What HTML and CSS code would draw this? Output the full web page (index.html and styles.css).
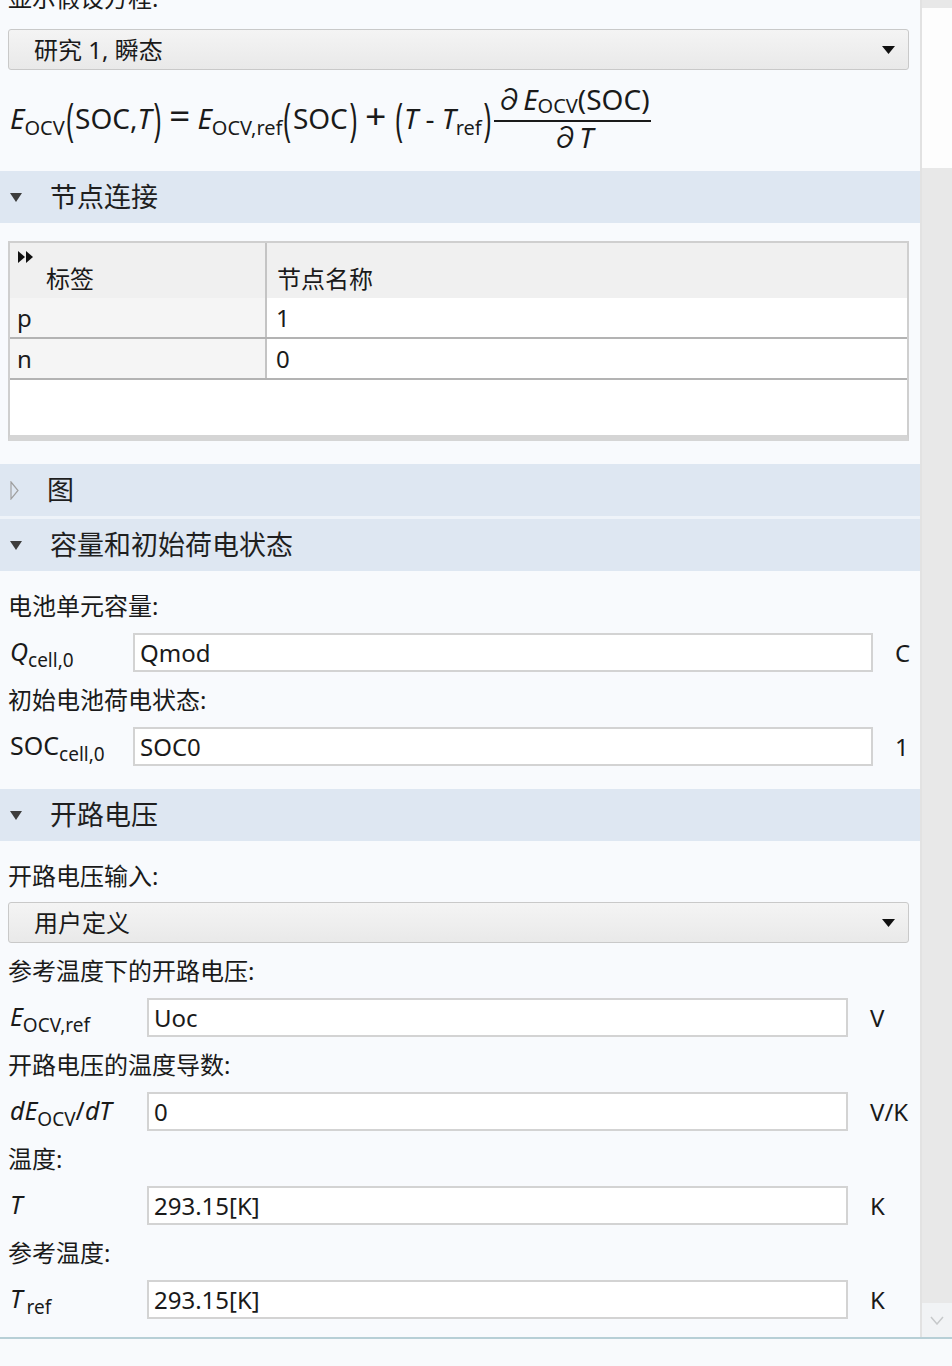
FILE: index.html
```html
<!DOCTYPE html>
<html lang="zh-CN">
  <head>
    <meta charset="UTF-8" />
    <meta name="viewport" content="width=device-width, initial-scale=1.0" />
    <title>电池设置</title>
    <link rel="stylesheet" href="styles.css">
  </head>
  <body>
    <div class="window">
      <div class="panel">
        <div class="top">
          <div class="caption first">显示假设方程:</div>
          <div class="combo">
            <span>研究 1, 瞬态</span>
            <svg class="combo-arrow" width="13" height="8" viewBox="0 0 13 8"><polygon points="0,0 13,0 6.5,8" /></svg>
          </div>
          <div class="equation">
            <div class="formula">
              <i>E</i><sub>OCV</sub><span class="paren">(</span>SOC,<i>T</i><span class="paren">)</span><span class="op">=</span><i>E</i><sub>OCV,ref</sub><span class="paren">(</span>SOC<span class="paren">)</span><span class="op">+</span><span class="paren">(</span><i>T</i> - <i>T</i><sub>ref</sub><span class="paren">)</span><span class="frac"><span class="num">∂<i>E</i><sub>OCV</sub>(SOC)</span><span class="den">∂<i>T</i></span></span>
            </div>
          </div>
        </div>

        <!-- 节点连接 -->
        <div class="section-head">
          <svg class="caret" width="12" height="9" viewBox="0 0 12 9"><polygon points="0,0 12,0 6,9" /></svg>
          <span>节点连接</span>
        </div>
        <div class="section-body nodes">
          <div class="node-table">
            <table>
              <tr>
                <th class="col-tag">
                  <svg class="expand" width="16" height="12" viewBox="0 0 16 12"><polygon points="0,0 7,6 0,12" /><polygon points="8,0 15,6 8,12" /></svg>
                  <span>标签</span>
                </th>
                <th><span>节点名称</span></th>
              </tr>
              <tr>
                <td class="col-tag">p</td>
                <td>1</td>
              </tr>
              <tr>
                <td class="col-tag">n</td>
                <td>0</td>
              </tr>
            </table>
          </div>
        </div>

        <!-- 图 (collapsed) -->
        <div class="section-head collapsed">
          <svg class="caret-open" width="10" height="19" viewBox="0 0 10 19"><polygon points="1,1 8,9.5 1,18" /></svg>
          <span>图</span>
        </div>

        <!-- 容量和初始荷电状态 -->
        <div class="section-head">
          <svg class="caret" width="12" height="9" viewBox="0 0 12 9"><polygon points="0,0 12,0 6,9" /></svg>
          <span>容量和初始荷电状态</span>
        </div>
        <div class="section-body">
          <div class="field">
            <div class="caption">电池单元容量:</div>
            <div class="field-row narrow">
              <div class="symbol"><i>Q</i><sub>cell,0</sub></div>
              <input type="text" value="Qmod" />
              <div class="unit">C</div>
            </div>
          </div>
          <div class="field">
            <div class="caption">初始电池荷电状态:</div>
            <div class="field-row narrow">
              <div class="symbol">SOC<sub>cell,0</sub></div>
              <input type="text" value="SOC0" />
              <div class="unit">1</div>
            </div>
          </div>
        </div>

        <!-- 开路电压 -->
        <div class="section-head">
          <svg class="caret" width="12" height="9" viewBox="0 0 12 9"><polygon points="0,0 12,0 6,9" /></svg>
          <span>开路电压</span>
        </div>
        <div class="section-body">
          <div class="field">
            <div class="caption">开路电压输入:</div>
            <div class="combo">
              <span>用户定义</span>
              <svg class="combo-arrow" width="13" height="8" viewBox="0 0 13 8"><polygon points="0,0 13,0 6.5,8" /></svg>
            </div>
          </div>
          <div class="field">
            <div class="caption">参考温度下的开路电压:</div>
            <div class="field-row wide">
              <div class="symbol"><i>E</i><sub>OCV,ref</sub></div>
              <input type="text" value="Uoc" />
              <div class="unit">V</div>
            </div>
          </div>
          <div class="field">
            <div class="caption">开路电压的温度导数:</div>
            <div class="field-row wide">
              <div class="symbol"><i>dE</i><sub>OCV</sub>/<i>dT</i></div>
              <input type="text" value="0" />
              <div class="unit">V/K</div>
            </div>
          </div>
          <div class="field">
            <div class="caption">温度:</div>
            <div class="field-row wide">
              <div class="symbol"><i>T</i></div>
              <input type="text" value="293.15[K]" />
              <div class="unit">K</div>
            </div>
          </div>
          <div class="field">
            <div class="caption">参考温度:</div>
            <div class="field-row wide">
              <div class="symbol"><i>T</i><sub class="gap">ref</sub></div>
              <input type="text" value="293.15[K]" />
              <div class="unit">K</div>
            </div>
          </div>
        </div>
      </div>

      <div class="scrollbar">
        <div class="thumb"></div>
        <div class="track"></div>
        <div class="scroll-down">
          <svg width="14" height="9" viewBox="0 0 14 9"><polyline points="1,1 7,8 13,1" /></svg>
        </div>
      </div>
    </div>
    <div class="status"></div>
  </body>
</html>
```

FILE: styles.css
```css
body {
  margin: 0;
  background-color: #f8fafd;
  font-family: "Noto Sans", "Noto Sans CJK SC", sans-serif;
  font-size: 24px;
  color: #1a1a1a;
  overflow: hidden;
}
.window {
  display: flex;
  height: 1337px;
  overflow: hidden;
}
.panel {
  flex: 1;
  background-color: #f8fafd;
  overflow: hidden;
}
.top {
  padding: 0 11px 0 8px;
}
.caption {
  line-height: 28px;
  white-space: nowrap;
}
.caption.first {
  margin-top: -16px;
}
.combo {
  display: flex;
  align-items: center;
  justify-content: space-between;
  box-sizing: border-box;
  height: 41px;
  margin-top: 17px;
  padding: 0 13px 0 25px;
  border: 1px solid #c9c9c9;
  border-radius: 3px;
  background: linear-gradient(#f4f4f4, #e9e9e9);
  line-height: 1;
}
.combo-arrow polygon {
  fill: #111;
}

/* formula under the study selector */
.equation {
  display: flex;
  align-items: center;
  box-sizing: border-box;
  height: 101px;
  padding-bottom: 6px;
}
.formula {
  font-size: 28px;
  line-height: 34px;
  white-space: nowrap;
  padding-left: 2px;
}
.formula sub {
  font-size: 20px;
  line-height: 0;
  vertical-align: -6px;
}
.paren {
  display: inline-block;
  margin: 0 1px;
  transform: scale(0.9, 1.6);
}
.op {
  display: inline-block;
  margin: 0 8px;
  font-size: 34px;
  transform: scaleX(1.1);
}
.frac {
  display: inline-flex;
  flex-direction: column;
  margin-left: 2px;
  text-align: center;
  vertical-align: 19px;
}
.frac .num {
  border-bottom: 2px solid #1a1a1a;
  padding: 0 1px 6px;
  line-height: 30px;
}
.frac .num sub {
  vertical-align: -3px;
}
.frac .den {
  line-height: 30px;
}

/* collapsible section headers */
.section-head {
  display: flex;
  align-items: center;
  height: 52px;
  padding-left: 10px;
  background-color: #dee7f2;
  font-size: 27px;
  color: #1f1f1f;
}
.section-head span {
  margin-left: 28px;
  margin-top: -4px;
}
.section-head.collapsed {
  border-bottom: 3px solid #eef3f9;
}
.section-head.collapsed span {
  margin-left: 27px;
}
.caret polygon {
  fill: #3d3d3d;
}
.caret-open polygon {
  fill: none;
  stroke: #a0a0a0;
  stroke-width: 1.2;
}
.section-body {
  padding: 21px 11px 23px 8px;
}
.section-body.nodes {
  padding-top: 18px;
}

/* node table */
.node-table {
  box-sizing: border-box;
  height: 200px;
  border: 2px solid #cfcfcf;
  border-bottom: 6px solid #d5d5d5;
  background: white;
}
.node-table table {
  width: 100%;
  border-collapse: collapse;
  table-layout: fixed;
}
.node-table th {
  position: relative;
  height: 41px;
  padding: 14px 0 0 10px;
  background-color: #f0f0f0;
  font-weight: normal;
  text-align: left;
  vertical-align: middle;
}
.node-table th + th,
.node-table td + td {
  border-left: 2px solid #c4c4c4;
}
.node-table th.col-tag {
  width: 219px;
  padding-left: 36px;
}
.expand {
  position: absolute;
  top: 8px;
  left: 8px;
}
.expand polygon {
  fill: #111;
}
.node-table td {
  height: 39px;
  padding: 0 0 0 9px;
  border-bottom: 2px solid #b3b3b3;
  line-height: 1;
}
.node-table td.col-tag {
  padding-left: 7px;
  background-color: #f5f5f5;
}

/* labelled input rows */
.field + .field {
  margin-top: 14px;
}
.field .combo {
  margin-top: 12px;
}
.field-row {
  display: grid;
  align-items: center;
  margin-top: 13px;
}
.field-row.narrow {
  grid-template-columns: 125px 1fr 36px;
}
.field-row.wide {
  grid-template-columns: 139px 1fr 61px;
}
.symbol {
  padding-left: 2px;
  white-space: nowrap;
  font-size: 25px;
  margin-top: -4px;
}
.symbol sub {
  font-size: 19px;
  line-height: 0;
}
.symbol sub.gap {
  margin-left: 4px;
}
.field-row input {
  box-sizing: border-box;
  width: 100%;
  height: 39px;
  padding: 0 5px;
  border: 2px solid #d3d3d3;
  background: white;
  font-family: "Noto Sans", "Noto Sans CJK SC", sans-serif;
  font-size: 24px;
  color: #1a1a1a;
}
.unit {
  padding-left: 22px;
  white-space: nowrap;
}

/* right scrollbar */
.scrollbar {
  display: flex;
  flex-direction: column;
  width: 30px;
  border-left: 2px solid #e2e2e2;
  background-color: #e8e8e8;
}
.thumb {
  height: 160px;
  margin-top: 8px;
  background-color: #fdfdfd;
}
.track {
  flex: 1;
}
.scroll-down {
  display: flex;
  align-items: center;
  justify-content: center;
  height: 34px;
  background-color: #f1f3f5;
}
.scroll-down polyline {
  fill: none;
  stroke: #c6c8ca;
  stroke-width: 1.5;
}
.status {
  height: 29px;
  border-top: 2px solid #b7cfd6;
  background-color: #f8fafc;
}
```
